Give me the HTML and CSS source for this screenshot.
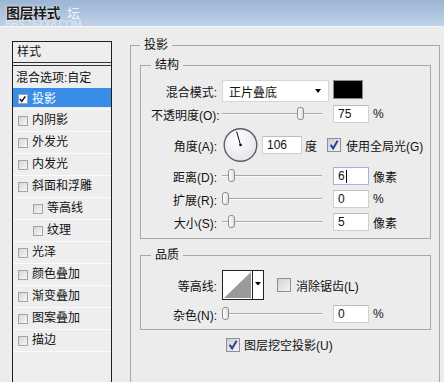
FILE: index.html
```html
<!DOCTYPE html>
<html lang="zh-CN">
<head>
<meta charset="utf-8">
<title>图层样式</title>
<link rel="stylesheet" href="styles.css">
</head>
<body>
<div class="dialog">
  <header class="titlebar">
    <span class="title">图层样式</span><span class="wm">坛</span>
    <span class="wm-url">BBS.16XX8.COM</span>
  </header>
  <main class="content">
    <nav class="styles-list">
      <div class="list-head">样式</div>
      <div class="row first">混合选项:自定</div>
      <div class="row selected"><span class="cb on"><svg width="10" height="10" viewBox="0 0 10 10"><path d="M2 5 L4.2 7.5 L8.2 2" fill="none" stroke="#111" stroke-width="1.6"/></svg></span>投影</div>
      <div class="row"><span class="cb"></span>内阴影</div>
      <div class="row"><span class="cb"></span>外发光</div>
      <div class="row"><span class="cb"></span>内发光</div>
      <div class="row"><span class="cb"></span>斜面和浮雕</div>
      <div class="row sub"><span class="cb"></span>等高线</div>
      <div class="row sub"><span class="cb"></span>纹理</div>
      <div class="row"><span class="cb"></span>光泽</div>
      <div class="row"><span class="cb"></span>颜色叠加</div>
      <div class="row"><span class="cb"></span>渐变叠加</div>
      <div class="row"><span class="cb"></span>图案叠加</div>
      <div class="row"><span class="cb"></span>描边</div>
    </nav>
    <section class="settings">
      <fieldset class="group outer">
        <legend>投影</legend>
        <fieldset class="group inner">
          <legend>结构</legend>
          <div class="field r-blend">
            <span class="lbl">混合模式:</span>
            <div class="select"><span>正片叠底</span><span class="caret"></span></div>
            <div class="swatch"></div>
          </div>
          <div class="field r-opacity">
            <span class="lbl">不透明度(O):</span>
            <div class="slider"><span class="thumb" style="left:75px"></span></div>
            <div class="num">75</div><span class="unit">%</span>
          </div>
          <div class="field r-angle">
            <span class="lbl">角度(A):</span>
            <svg class="dial" width="35" height="36" viewBox="0 0 35 36">
              <defs><radialGradient id="dg" cx="40%" cy="35%" r="70%"><stop offset="0" stop-color="#ffffff"/><stop offset="1" stop-color="#e2e4e8"/></radialGradient></defs>
              <circle cx="17.5" cy="18" r="16.3" fill="url(#dg)" stroke="#5b606c" stroke-width="1.4"/>
              <line x1="17.5" y1="18" x2="13.6" y2="4.6" stroke="#111" stroke-width="1"/>
              <circle cx="17.5" cy="18" r="1.3" fill="#000"/>
            </svg>
            <div class="num wide">106</div><span class="unit">度</span>
            <span class="chk global"><svg width="14" height="14" viewBox="0 0 14 14"><defs><linearGradient id="cg1" x1="0" y1="0" x2="1" y2="1"><stop offset="0" stop-color="#c9ccd3"/><stop offset="1" stop-color="#f6f6f8"/></linearGradient></defs><rect x="0.5" y="0.5" width="13" height="13" fill="url(#cg1)" stroke="#8e8f94"/><path d="M3.6 6.8 L6.1 10.4 L10.6 2.8" fill="none" stroke="#2c3f8c" stroke-width="2"/></svg></span>
            <span class="chk-text">使用全局光(G)</span>
          </div>
          <div class="field r-dist">
            <span class="lbl">距离(D):</span>
            <div class="slider"><span class="thumb" style="left:6px"></span></div>
            <div class="num focus">6<span class="caret-bar"></span></div><span class="unit">像素</span>
          </div>
          <div class="field r-spread">
            <span class="lbl">扩展(R):</span>
            <div class="slider"><span class="thumb" style="left:0px"></span></div>
            <div class="num">0</div><span class="unit">%</span>
          </div>
          <div class="field r-size">
            <span class="lbl">大小(S):</span>
            <div class="slider"><span class="thumb" style="left:6px"></span></div>
            <div class="num">5</div><span class="unit">像素</span>
          </div>
        </fieldset>
        <fieldset class="group inner quality">
          <legend>品质</legend>
          <div class="field r-contour">
            <span class="lbl">等高线:</span>
            <svg class="contour" width="42" height="30" viewBox="0 0 42 30">
              <rect x="0.5" y="0.5" width="41" height="29" fill="#fff" stroke="#222"/>
              <polygon points="2,28 29,2 29,28" fill="#9a9a9a"/>
              <line x1="30.5" y1="1" x2="30.5" y2="29" stroke="#222"/>
              <polygon points="33,12 39,12 36,15.5" fill="#000"/>
            </svg>
            <span class="chk aa"><svg width="14" height="14" viewBox="0 0 14 14"><defs><linearGradient id="cg2" x1="0" y1="0" x2="1" y2="1"><stop offset="0" stop-color="#cfd0d4"/><stop offset="1" stop-color="#f7f7f7"/></linearGradient></defs><rect x="0.5" y="0.5" width="13" height="13" fill="url(#cg2)" stroke="#8e8f94"/></svg></span>
            <span class="chk-text">消除锯齿(L)</span>
          </div>
          <div class="field r-noise">
            <span class="lbl">杂色(N):</span>
            <div class="slider"><span class="thumb" style="left:0px"></span></div>
            <div class="num">0</div><span class="unit">%</span>
          </div>
        </fieldset>
        <div class="field r-knockout">
          <span class="chk"><svg width="14" height="14" viewBox="0 0 14 14"><defs><linearGradient id="cg3" x1="0" y1="0" x2="1" y2="1"><stop offset="0" stop-color="#c9ccd3"/><stop offset="1" stop-color="#f6f6f8"/></linearGradient></defs><rect x="0.5" y="0.5" width="13" height="13" fill="url(#cg3)" stroke="#8e8f94"/><path d="M3.6 6.8 L6.1 10.4 L10.6 2.8" fill="none" stroke="#2c3f8c" stroke-width="2"/></svg></span>
          <span class="chk-text">图层挖空投影(U)</span>
        </div>
      </fieldset>
    </section>
  </main>
</div>
</body>
</html>
```
FILE: styles.css
```css
* { box-sizing: border-box; }
html, body {
  margin: 0;
  padding: 0;
  width: 444px;
  height: 382px;
  overflow: hidden;
  background: #ececec;
  font-family: "Liberation Sans", "Noto Sans CJK SC", sans-serif;
  font-size: 12px;
  color: #111;
}
.dialog {
  display: flex;
  flex-direction: column;
  height: 382px;
}
.titlebar {
  position: relative;
  height: 26px;
  flex: none;
  overflow: hidden;
  background: linear-gradient(#9cb5d4, #bfd2e8);
  padding: 4px 0 0 6px;
  line-height: 18px;
}
.title {
  font-size: 14px;
  font-weight: bold;
  color: #1b1b1b;
  text-shadow: 0 0 2px #fff, 0 0 1px #fff;
  letter-spacing: -0.5px;
}
.wm {
  font-size: 13px;
  color: rgba(255, 255, 255, 0.85);
  margin-left: 7px;
}
.wm-url {
  position: absolute;
  left: 5px;
  top: 19px;
  font-size: 10px;
  line-height: 11px;
  color: rgba(255, 255, 255, 0.55);
  letter-spacing: -0.2px;
}
.content {
  flex: 1;
  display: flex;
  align-items: flex-start;
  padding-left: 12px;
  border-top: 1px solid #f6f6f6;
  gap: 18px;
}
.styles-list {
  width: 100px;
  height: 400px;
  margin-top: 14px;
  border: 1px solid #1e1e1e;
  background: #eeeeee;
  flex: none;
}
.list-head {
  height: 24px;
  line-height: 20px;
  padding-left: 4px;
  border-bottom: 4px double #333;
}
.row {
  display: flex;
  align-items: center;
  height: 22px;
  line-height: 21px;
  border-bottom: 1px solid #fbfbfb;
  padding-left: 5px;
  white-space: nowrap;
}
.row.first {
  height: 22px;
  padding: 3px 0 0 3px;
  border-bottom: 0;
}
.row.selected {
  color: #fff;
  background: linear-gradient(#3a8de6 0, #3a8de6 19px, transparent 19px);
  align-items: flex-start;
  padding-top: 1px;
}
.row.selected .cb { margin-top: 5px; }
.row.sub { padding-left: 20px; }
.cb {
  width: 10px;
  height: 10px;
  flex: none;
  margin-right: 4px;
  border: 1px solid #a4a4a4;
  background: linear-gradient(135deg, #d6d6d6, #f7f7f7);
  display: flex;
}
.cb.on {
  background: #fff;
  border-color: #9aa7b8;
}
.cb svg { margin: -1px 0 0 -1px; }
.settings {
  padding-top: 10px;
  flex: none;
}
.group {
  margin: 0;
  border: 1px solid #a7a7a7;
  min-width: 0;
}
.group legend {
  padding: 0 4px;
  line-height: 16px;
  font-size: 12px;
}
.outer {
  width: 310px;
  height: 400px;
  padding: 4px 8px 0 9px;
}
.inner {
  padding: 7px 0 7px 10px;
}
.quality {
  margin-top: 8px;
  padding-bottom: 6px;
}
.field {
  display: flex;
  align-items: center;
  white-space: nowrap;
}
.lbl {
  width: 66px;
  flex: none;
  text-align: right;
  margin-right: 5px;
}
.r-blend { height: 22px; }
.r-opacity { height: 18px; margin-top: 3px; }
.r-angle { height: 36px; margin-top: 4px; }
.r-dist { height: 18px; margin-top: 4px; }
.r-spread { height: 18px; margin-top: 5px; }
.r-size { height: 18px; margin-top: 5px; }
.r-contour { height: 30px; }
.r-noise { height: 18px; margin-top: 5px; }
.r-knockout { height: 15px; margin-top: 7px; padding-left: 86px; }
.select {
  width: 107px;
  height: 22px;
  background: #fff;
  border: 1px solid #d6d6d6;
  display: flex;
  align-items: center;
  justify-content: space-between;
  padding: 0 7px 0 6px;
}
.caret {
  width: 0;
  height: 0;
  border-left: 3.5px solid transparent;
  border-right: 3.5px solid transparent;
  border-top: 4px solid #000;
}
.swatch {
  width: 30px;
  height: 19px;
  margin-left: 4px;
  background: #000;
  border: 1px solid #8a8a8a;
  align-self: flex-start;
  margin-top: 0;
}
.slider {
  position: relative;
  width: 100px;
  height: 18px;
  flex: none;
}
.slider::before {
  content: "";
  position: absolute;
  left: 0;
  right: 0;
  top: 8px;
  height: 1px;
  background: #a9a9a9;
  box-shadow: 0 1px 0 #fafafa;
}
.thumb {
  position: absolute;
  top: 2px;
  width: 7px;
  height: 13px;
  border: 1px solid #8d8d8d;
  border-radius: 3px 3px 3px 3px;
  background: linear-gradient(90deg, #ffffff, #dedede);
}
.num {
  width: 36px;
  height: 18px;
  margin-left: 11px;
  background: #fff;
  border: 1px solid #d0d0d0;
  border-top-color: #bdbdbd;
  padding-left: 4px;
  line-height: 16px;
  display: flex;
  align-items: center;
}
.num.focus { border-color: #9bb6d6; }
.caret-bar {
  width: 1px;
  height: 13px;
  background: #000;
  margin-left: 1px;
}
.num.wide {
  width: 40px;
  margin-left: 4px;
}
.unit { margin-left: 4px; }
.r-angle .unit { margin-left: 3px; }
.dial {
  margin-left: 1px;
  flex: none;
}
.chk {
  width: 14px;
  height: 14px;
  flex: none;
  display: flex;
}
.chk.global { margin-left: 10px; }
.chk.aa { margin-left: 13px; }
.chk-text { margin-left: 5px; }
.r-knockout .chk-text { margin-left: 4px; }
.contour { flex: none; }
```
